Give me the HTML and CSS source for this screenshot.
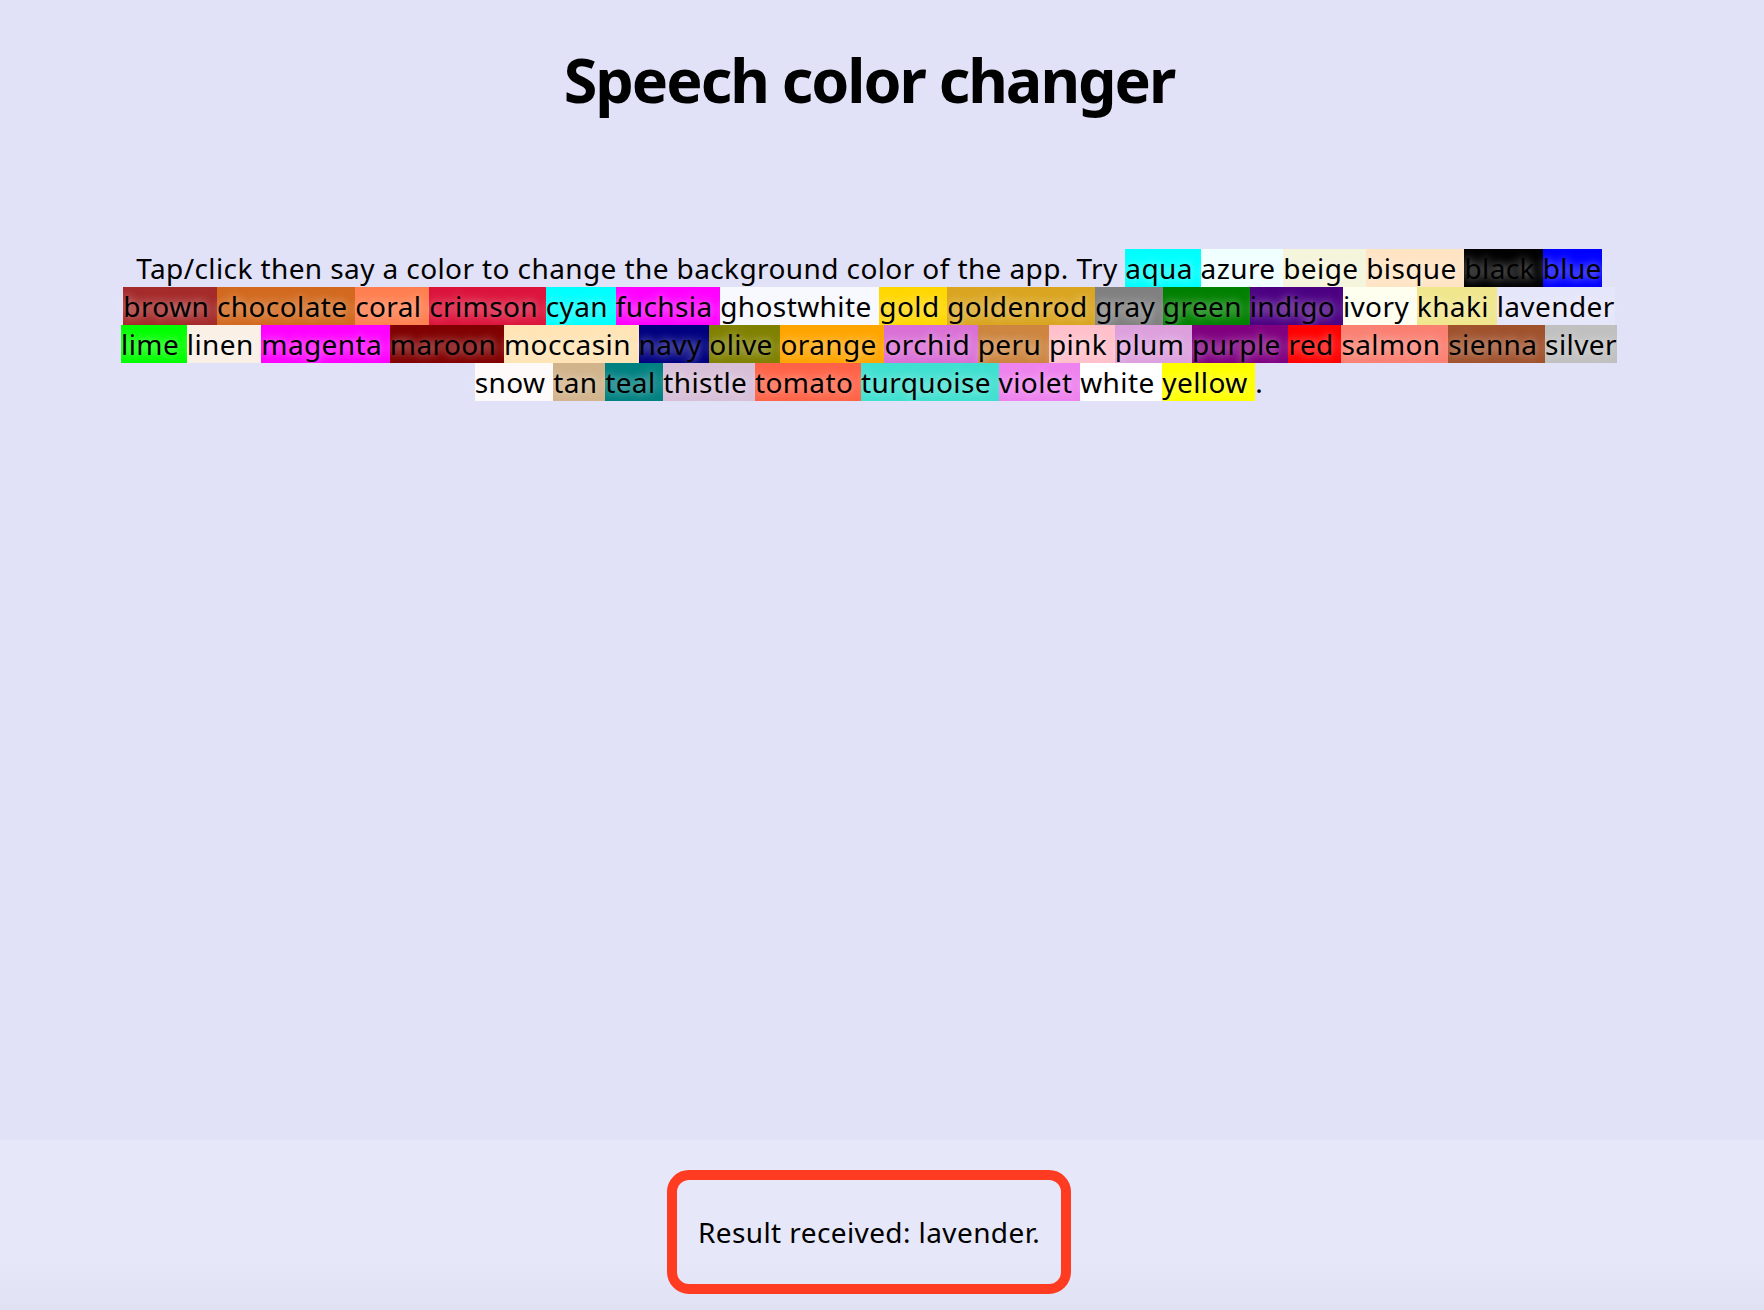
FILE: index.html
```html
<!DOCTYPE html>
<html lang="en">
<head>
    <meta charset="UTF-8">
    <meta name="viewport" content="width=device-width, initial-scale=1.0">
    <title>Speech color changer</title>
    <link rel="stylesheet" href="styles.css">
</head>
<body>
    <main class="page">
      <h1>Speech color changer</h1>

      <p class="hints">Tap/click then say a color to change the background color of the app. Try <span class="swatch" style="background-color: aqua;"> aqua </span><span class="swatch" style="background-color: azure;"> azure </span><span class="swatch" style="background-color: beige;"> beige </span><span class="swatch" style="background-color: bisque;"> bisque </span><span class="swatch" style="background-color: black;"> black </span><span class="swatch" style="background-color: blue;"> blue </span><span class="swatch" style="background-color: brown;"> brown </span><span class="swatch" style="background-color: chocolate;"> chocolate </span><span class="swatch" style="background-color: coral;"> coral </span><span class="swatch" style="background-color: crimson;"> crimson </span><span class="swatch" style="background-color: cyan;"> cyan </span><span class="swatch" style="background-color: fuchsia;"> fuchsia </span><span class="swatch" style="background-color: ghostwhite;"> ghostwhite </span><span class="swatch" style="background-color: gold;"> gold </span><span class="swatch" style="background-color: goldenrod;"> goldenrod </span><span class="swatch" style="background-color: gray;"> gray </span><span class="swatch" style="background-color: green;"> green </span><span class="swatch" style="background-color: indigo;"> indigo </span><span class="swatch" style="background-color: ivory;"> ivory </span><span class="swatch" style="background-color: khaki;"> khaki </span><span class="swatch" style="background-color: lavender;"> lavender </span><span class="swatch" style="background-color: lime;"> lime </span><span class="swatch" style="background-color: linen;"> linen </span><span class="swatch" style="background-color: magenta;"> magenta </span><span class="swatch" style="background-color: maroon;"> maroon </span><span class="swatch" style="background-color: moccasin;"> moccasin </span><span class="swatch" style="background-color: navy;"> navy </span><span class="swatch" style="background-color: olive;"> olive </span><span class="swatch" style="background-color: orange;"> orange </span><span class="swatch" style="background-color: orchid;"> orchid </span><span class="swatch" style="background-color: peru;"> peru </span><span class="swatch" style="background-color: pink;"> pink </span><span class="swatch" style="background-color: plum;"> plum </span><span class="swatch" style="background-color: purple;"> purple </span><span class="swatch" style="background-color: red;"> red </span><span class="swatch" style="background-color: salmon;"> salmon </span><span class="swatch" style="background-color: sienna;"> sienna </span><span class="swatch" style="background-color: silver;"> silver </span><span class="swatch" style="background-color: snow;"> snow </span><span class="swatch" style="background-color: tan;"> tan </span><span class="swatch" style="background-color: teal;"> teal </span><span class="swatch" style="background-color: thistle;"> thistle </span><span class="swatch" style="background-color: tomato;"> tomato </span><span class="swatch" style="background-color: turquoise;"> turquoise </span><span class="swatch" style="background-color: violet;"> violet </span><span class="swatch" style="background-color: white;"> white </span><span class="swatch" style="background-color: yellow;"> yellow </span>.</p>
    </main>

    <footer class="output-bar">
      <p class="output">Result received: lavender.</p>
    </footer>
</body>
</html>
```

FILE: styles.css
```css
html, body {
    margin: 0;
}
body {
    min-height: 100vh;
    display: flex;
    flex-direction: column;
    background-color: #e1e1f8; /* lavender, as the screenshot shows it */
    color: #000;
    font-family: "Noto Sans", "Open Sans", sans-serif;
}
.page {
    margin-right: 26px; /* content sits a little left of centre */
    text-align: center;
}
h1 {
    margin: 38px 0 0;
    font-size: 61px;
    font-weight: bold;
    letter-spacing: -2px;
}
.hints {
    max-width: 1500px;
    margin: 128px auto 0;
    font-size: 28px;
    letter-spacing: 0.4px;
}
.swatch {
    text-shadow: 0 0 10px rgba(255, 255, 255, 0.7);
}
.output-bar {
    margin-top: auto;
    height: 170px;
    display: flex;
    justify-content: center;
    align-items: flex-start;
    padding-right: 26px;
    background: linear-gradient(to bottom, #e6e7f8 70%, #e0e1f2);
}
.output {
    margin: 30px 0 0;
    height: 104px;
    padding: 0 21px;
    display: flex;
    align-items: center;
    border: 10px solid #ff3b22;
    border-radius: 22px;
    font-size: 28px;
    letter-spacing: 0.4px;
}
```
